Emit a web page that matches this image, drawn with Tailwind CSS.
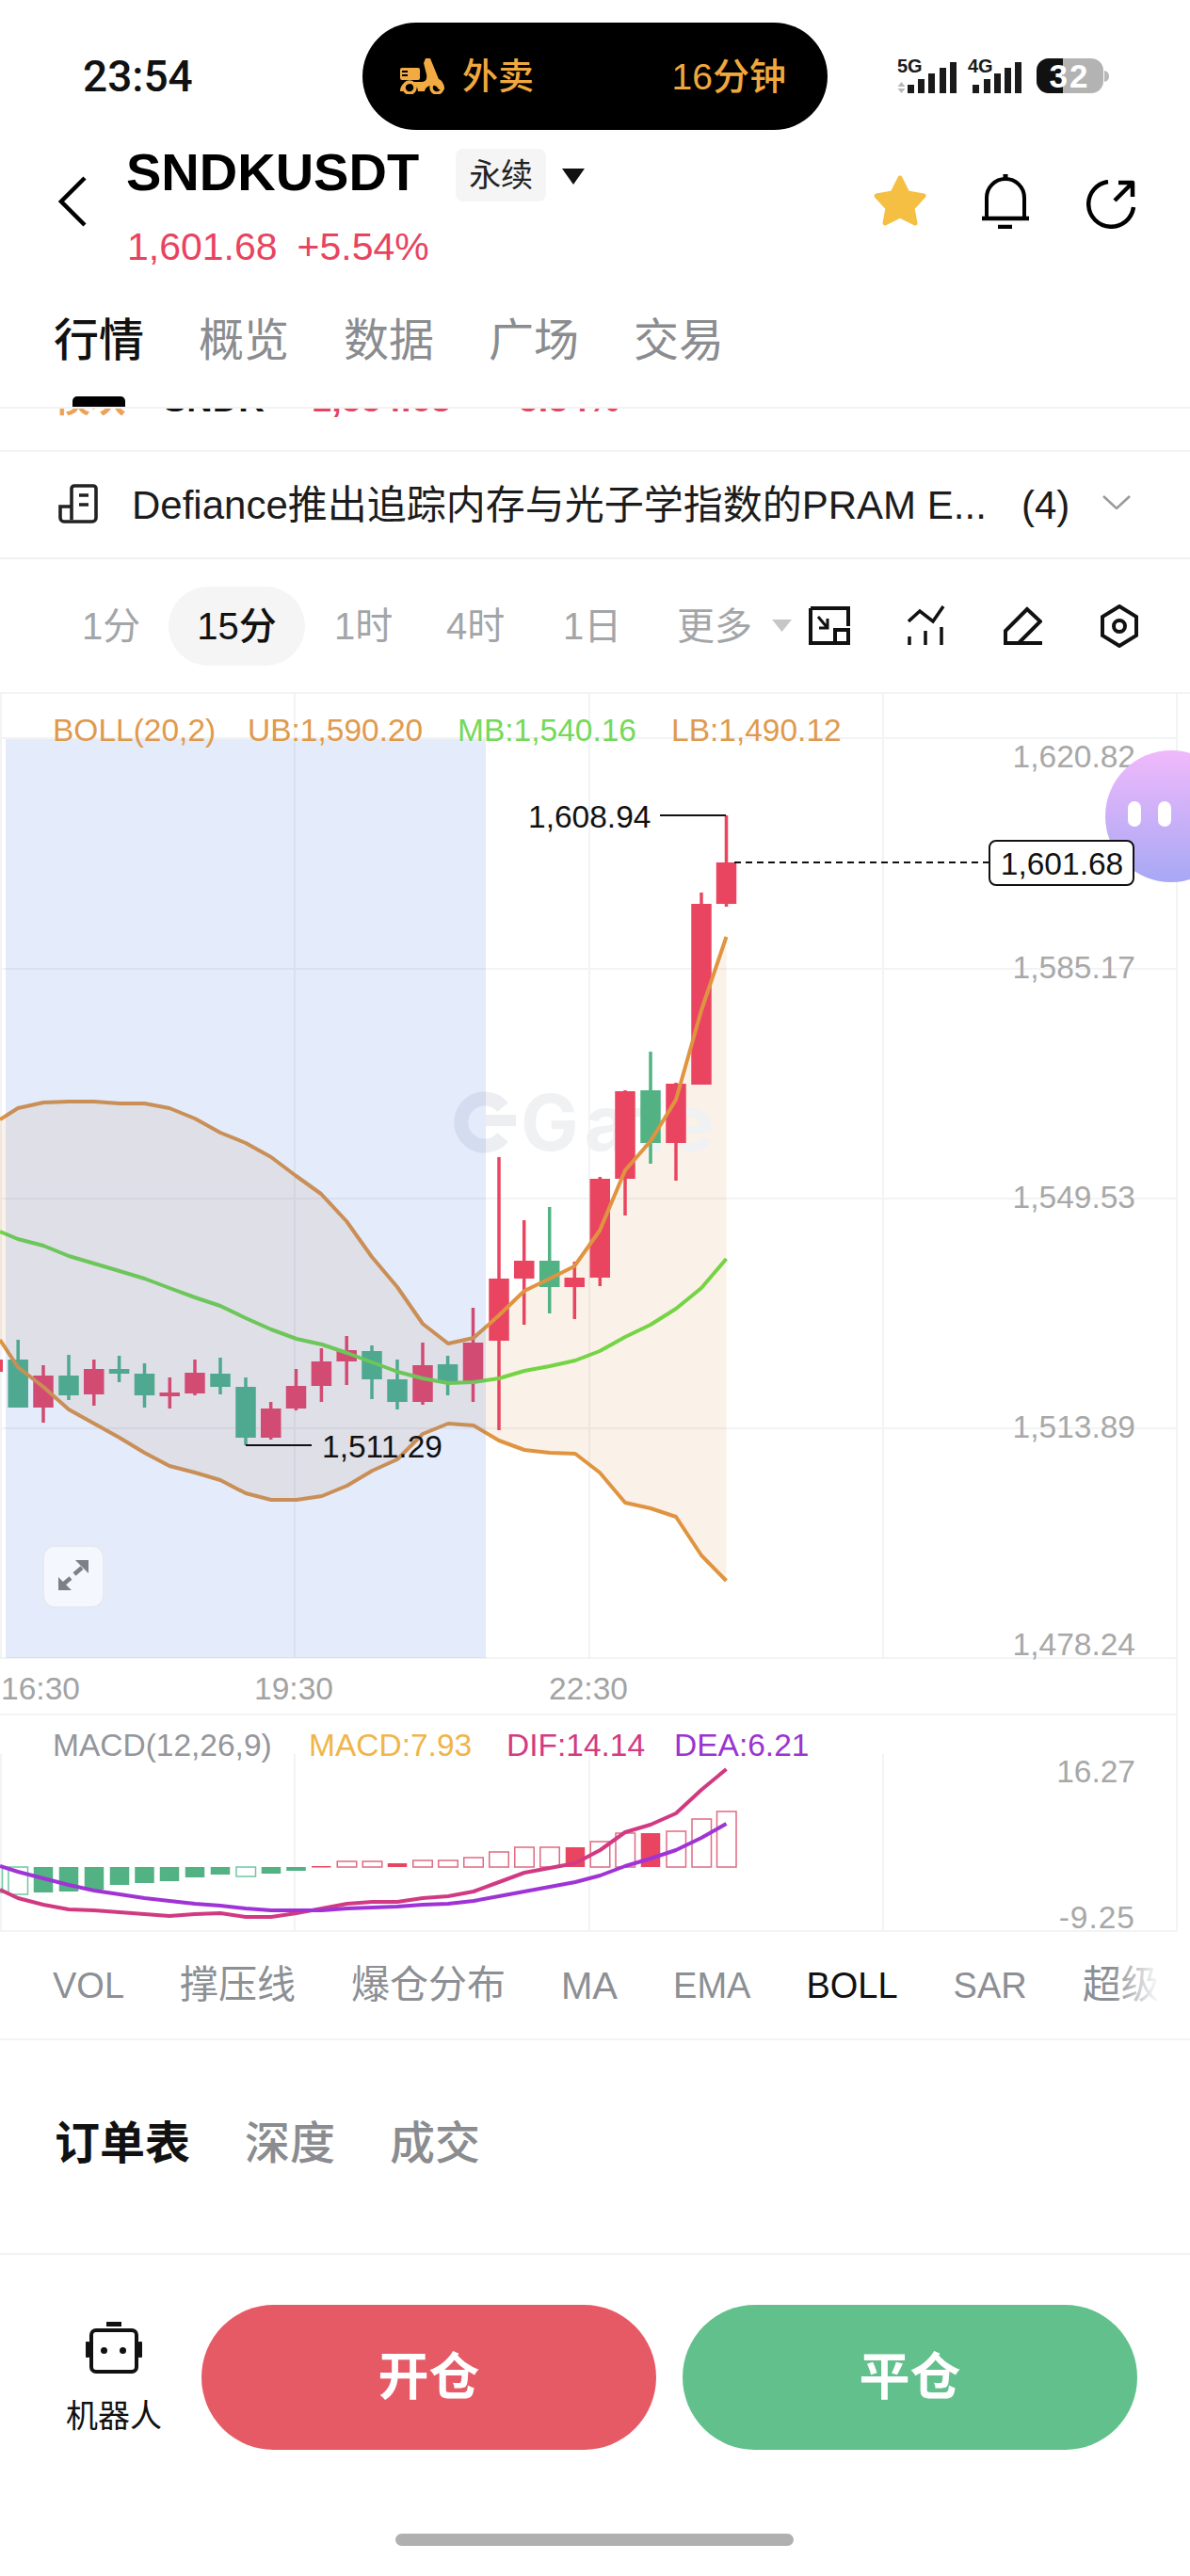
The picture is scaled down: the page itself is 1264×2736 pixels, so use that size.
<!DOCTYPE html>
<html lang="zh">
<head>
<meta charset="utf-8">
<script src="https://cdn.jsdelivr.net/npm/@tailwindcss/browser@4"></script>
</head>
<body class="bg-white">
<div class="w-[1264px] h-[2736px] overflow-hidden bg-white text-black [font-family:'Liberation_Sans','Noto_Sans_CJK_SC',sans-serif]">

  <!-- status bar -->
  <div class="flex items-start h-[150px] pt-[24px]">
    <div class="w-[385px] h-[114px] pl-[88px] flex items-center text-[46px] font-medium [font-family:Roboto,sans-serif] text-[#111]">23:54</div>
    <div class="w-[494px] h-[114px] bg-black rounded-full flex items-center pl-[40px] pr-[44px] text-[#f0a83e]">
      <svg width="47" height="38" viewBox="0 0 47 38" fill="#f1ab42"><rect x="0" y="10" width="21" height="13" rx="2"/><rect x="2" y="13" width="6" height="2" fill="#000"/><rect x="2" y="17" width="6" height="2" fill="#000"/><path d="M27 0h5l9 22c3 1 6 5 6 11h-6a8 8 0 0 0-15 2H19a8 8 0 0 0-16 0H0c0-6 4-10 9-10h14c4 0 6-3 5-8l-3-12z"/><circle cx="10" cy="31" r="6" fill="none" stroke="#f1ab42" stroke-width="3.5"/><circle cx="39" cy="31" r="6" fill="none" stroke="#f1ab42" stroke-width="3.5"/></svg>
      <span class="ml-[19px] text-[38px] leading-none font-medium">外卖</span>
      <span class="ml-auto text-[39px] leading-none font-medium">16分钟</span>
    </div>
    <svg class="ml-[74px] mt-[28px]" width="226" height="48" viewBox="953 52 226 48">
      <g fill="#1a1a1a">
        <text x="953" y="77" font-size="20" font-weight="700">5G</text>
        <text x="1028" y="77" font-size="20" font-weight="700">4G</text>
        <path d="M964 90h7v9h-7zM975 84h7v15h-7zM986 78h7v21h-7zM998 72h7v27h-7zM1009 66h7v33h-7zM1033 90h7v9h-7zM1045 84h7v15h-7zM1056 78h7v21h-7zM1067 72h7v27h-7zM1078 66h7v33h-7z"/>
      </g>
      <path d="M957.5 87l4 5h-8zM957.5 99l4-5h-8z" fill="#b8b8b8"/>
      <rect x="1101" y="62" width="71" height="37" rx="13" fill="#b3b3b3"/>
      <path d="M1129 62h-15a13 13 0 0 0-13 13v11a13 13 0 0 0 13 13h15z" fill="#111"/>
      <path d="M1173 75a6 6 0 0 1 5 6a6 6 0 0 1-5 6z" fill="#b8b8b8"/>
      <text x="1136" y="93" text-anchor="middle" font-size="35" font-weight="700" letter-spacing="2" fill="#fff">32</text>
    </svg>
  </div>

  <!-- title -->
  <div class="flex h-[150px]">
    <div class="w-[134px] pl-[62px] pt-[37px]">
      <svg width="30" height="54" viewBox="0 0 30 54" fill="none" stroke="#000" stroke-width="4.5"><path d="M28 2L3 27l25 25"/></svg>
    </div>
    <div>
      <div class="flex items-center h-[72px]">
        <span class="text-[56px] leading-none font-bold -mt-[6px]">SNDKUSDT</span>
        <span class="ml-[39px] w-[96px] h-[56px] bg-[#f5f5f5] rounded-[8px] flex items-center justify-center text-[34px] leading-none text-[#222]">永续</span>
        <svg class="ml-[17px] mt-[2px]" width="24" height="17" viewBox="0 0 24 17"><path d="M0 0h24L12 17z" fill="#111"/></svg>
      </div>
      <div class="flex items-center h-[57px] mt-[12px] pl-[1px] text-[41px] leading-none text-[#e8445f]">
        <span>1,601.68</span><span class="ml-[21px]">+5.54%</span>
      </div>
    </div>
    <div class="ml-auto mr-[58px] pt-[35px] flex items-start">
      <svg width="58" height="56" viewBox="0 0 58 56"><path d="M29 4l8 16 17 3-12 13 3 16-16-8-16 8 3-16L4 23l17-3z" fill="#f4bf42" stroke="#f4bf42" stroke-width="5" stroke-linejoin="round"/></svg>
      <svg class="ml-[58px]" width="50" height="58" viewBox="0 0 50 58" fill="none" stroke="#000" stroke-width="4"><path d="M5 46V25a20 20 0 0 1 40 0v21"/><path d="M0 47h50" stroke-width="4.5"/><path d="M17 56h15" stroke-width="4.5"/><path d="M25 0v6" stroke-width="5"/></svg>
      <svg class="ml-[61px] mt-[6px]" width="52" height="52" viewBox="0 0 52 52" fill="none" stroke="#000" stroke-width="4.5"><path d="M23 2A24 24 0 1 0 50 29"/><path d="M30 22L49 3M34 3h15v15" stroke-linejoin="round"/></svg>
    </div>
  </div>

  <!-- tabs -->
  <div class="flex gap-[58px] pl-[57px] pt-[38px] h-[134px] border-b-2 border-[#f3f3f3] text-[48px] leading-[48px] text-[#8a8c8f]">
    <div class="flex flex-col items-center text-[#111] font-medium"><span>行情</span><span class="mt-[35px] w-[56px] h-[11px] bg-black rounded-t-[5px]"></span></div>
    <span>概览</span><span>数据</span><span>广场</span><span>交易</span>
  </div>

  <!-- clipped scrolled row -->
  <div class="h-[44px] overflow-hidden border-b-2 border-[#f3f3f3] box-content">
    <div class="flex items-center -mt-[30px] h-[40px] pl-[58px] text-[38px] leading-[40px] font-bold">
      <span class="w-[115px] text-[#eda25a]">模块</span><span class="w-[158px] text-[#111]">SNDK</span><span class="w-[207px] text-[#e8445f]">1,554.68</span><span class="text-[#e8445f]">-5.34%</span>
    </div>
  </div>

  <!-- news row -->
  <div class="h-[112px] flex items-center border-b-2 border-[#f0f0f0] box-content">
    <svg class="ml-[62px] -mt-[2px]" width="42" height="42" viewBox="0 0 42 42" fill="none" stroke="#222" stroke-width="3.6"><path d="M14 38V5a3 3 0 0 1 3-3h20a3 3 0 0 1 3 3v31a4 4 0 0 1-4 4H6a4 4 0 0 1-4-4V24h12"/><path d="M22 12h10M22 22h10"/></svg>
    <span class="ml-[36px] mt-[2px] text-[42px] leading-none text-[#1c1c1c] whitespace-nowrap w-[904px]">Defiance推出追踪内存与光子学指数的PRAM E...</span>
    <span class="ml-[41px] mt-[2px] text-[42px] leading-none text-[#1c1c1c]">(4)</span>
    <svg class="ml-[35px] -mt-[6px]" width="30" height="15" viewBox="0 0 30 15" fill="none" stroke="#9a9a9a" stroke-width="2.5"><path d="M1 1l14 13L29 1"/></svg>
  </div>

  <!-- toolbar -->
  <div class="h-[141px] flex items-center text-[40px] leading-none text-[#a3a5a8]">
    <span class="ml-[87px] w-[62px] whitespace-nowrap">1分</span>
    <span class="ml-[30px] w-[145px] h-[84px] rounded-full bg-[#f5f5f5] flex items-center justify-center text-[#111] font-medium">15分</span>
    <span class="ml-[31px] w-[61px] whitespace-nowrap">1时</span>
    <span class="ml-[58px] w-[64px] whitespace-nowrap">4时</span>
    <span class="ml-[60px] w-[56px] whitespace-nowrap">1日</span>
    <span class="ml-[65px] w-[82px] whitespace-nowrap">更多</span>
    <svg class="ml-[19px]" width="21" height="13" viewBox="0 0 21 13"><path d="M0 0h21L10.500 13z" fill="#c4c6c9"/></svg>
    <svg class="ml-[18px]" width="44" height="41" viewBox="0 0 44 41" fill="none" stroke="#111" stroke-width="4"><path d="M2 2h40v19M2 2v37h40"/><path d="M28 25h14v14H28z"/><path d="M10 11l10 12M20 13v10H11" stroke-width="3"/></svg>
    <svg class="ml-[61px]" width="40" height="44" viewBox="0 0 40 44" fill="none" stroke="#111" stroke-width="3.5"><path d="M1 17L13 6l14 11L38 1"/><path d="M2 33v9M19 27v15M36 23v19"/></svg>
    <svg class="ml-[61px]" width="42" height="42" viewBox="0 0 42 42" fill="none" stroke="#111" stroke-width="4"><path d="M26 3L3 26v13h14l23-23z"/><path d="M17 39h25"/></svg>
    <svg class="ml-[62px]" width="40" height="46" viewBox="0 0 40 46" fill="none" stroke="#111" stroke-width="4"><path d="M20 2l18 11v20L20 44 2 33V13z"/><circle cx="20" cy="23" r="6"/></svg>
  </div>

  <!-- chart -->
  <svg class="block" width="1264" height="1317" viewBox="0 735 1264 1317">
    <!-- grid -->
    <path d="M0 736H1264M0 784H1250M0 1029H1250M0 1273H1250M0 1517H1250M0 1761H1250M0 1821H1250M0 2051H1250M1 735V1761M313 735V1761M626 735V1761M938 735V1761M1250 735V2051M1 1863V2051M313 1863V2051M626 1863V2051M938 1863V2051" stroke="#f2f3f5" stroke-width="2" fill="none"/>
    <!-- band -->
    <path d="M0 1189L19 1177 46 1171 73 1170 100 1170 127 1172 153.500 1172 180 1177 207 1188 234 1203 261 1214 288 1229 314.500 1249 341 1268 368 1297 395 1335 422 1367 449 1406 476 1427 503 1421 530 1397 557 1371 584 1358 610 1345 637 1307 664 1243 691 1212 718 1168 745 1073 771.500 995V1679L745 1652 718 1611 691 1602 664 1596 637 1564 611 1544 584 1543 557 1540 530 1530 503 1514 476 1512 449 1523 422 1550 395.500 1562 368.600 1578 342 1589 315 1593 288 1593 261 1586 234 1572 207 1564 180 1557 153.500 1543 127 1527 100 1512 73 1497 46 1473 19 1452 0 1423Z" fill="#cd7319" fill-opacity=".1"/>
    <!-- watermark -->
    <path d="M534 1176A25 25 0 1 0 534 1208" fill="none" stroke="#edeef1" stroke-width="15"/>
    <path d="M516 1190h32" stroke="#edeef1" stroke-width="12"/>
    <text x="553" y="1222" font-size="82" font-weight="700" letter-spacing="6" fill="#f0f1f3" font-family="Inter, sans-serif">Gate</text>
    <!-- candles -->
    <g stroke="#52b283" stroke-width="3.500" fill="none">
      <path d="M19.200 1423V1495M73 1439V1487M126.600 1440V1468M153.500 1448V1495M234 1442V1481M261 1463V1535M395 1429V1486M422 1444V1497M475.600 1440V1482M583.700 1282V1395M691 1117V1236"/>
    </g>
    <path fill="#52b283" d="M8.450 1444h21.500v51H8.450zM62.250 1461h21.500v21H62.250zM115.850 1454h21.500v5H115.850zM142.750 1459h21.500v23H142.750zM223.250 1459h21.500v14H223.250zM250.250 1473h21.500v54H250.250zM384.250 1435h21.500v30H384.250zM411.250 1465h21.500v24H411.250zM464.850 1449h21.500v18H464.850zM572.950 1339h21.500v28H572.950zM680.250 1158h21.500v56H680.250z"/>
    <g stroke="#ea4560" stroke-width="3.500" fill="none">
      <path d="M46 1450V1511M99.800 1444V1493M180.300 1463V1496M207 1444V1482M287.700 1489V1529M314.500 1454V1498M341.400 1432V1489M368.200 1419V1471M449 1426V1492M502.500 1389V1489M530 1229V1519M556.700 1296V1407M610.300 1340V1401M637.300 1250V1366M664 1158V1291M718 1150V1254M745 948V1152M771.500 866V963"/>
    </g>
    <path fill="#ea4560" d="M-8 1444h11v13H-8zM35.250 1461h21.500v34H35.250zM89 1454h21.500v27H89zM169.500 1479h21.500v4H169.500zM196.250 1458h21.500v22H196.250zM277 1496h21.500v31H277zM303.750 1472h21.500v24H303.750zM330.650 1446h21.500v26H330.650zM357.450 1434h21.500v12H357.450zM438.250 1450h21.500v39H438.250zM491.750 1426h21.500v41H491.750zM519.250 1358h21.500v66H519.250zM546 1339h21.500v19H546zM599.500 1357h21.500v10H599.500zM626.500 1252h21.500v105H626.500zM653.250 1159h21.500v93H653.250zM707.250 1151h21.500v63H707.250zM734.250 960h21.500v192H734.250zM760.750 916h21.500v44H760.750z"/>
    <!-- bollinger lines -->
    <g fill="none" stroke-width="4" stroke-linejoin="round">
      <path stroke="#e09440" d="M0 1189L19 1177 46 1171 73 1170 100 1170 127 1172 153.500 1172 180 1177 207 1188 234 1203 261 1214 288 1229 314.500 1249 341 1268 368 1297 395 1335 422 1367 449 1406 476 1427 503 1421 530 1397 557 1371 584 1358 610 1345 637 1307 664 1243 691 1212 718 1168 745 1073 771.500 995"/>
      <path stroke="#e09440" d="M0 1423L19 1452 46 1473 73 1497 100 1512 127 1527 153.500 1543 180 1557 207 1564 234 1572 261 1586 288 1593 315 1593 342 1589 368.600 1578 395.500 1562 422 1550 449 1523 476 1512 503 1514 530 1530 557 1540 584 1543 611 1544 637 1564 664 1596 691 1602 718 1611 745 1652 771.500 1679"/>
      <path stroke="#74d444" d="M0 1308L19 1316 46 1323 73 1334 100 1342 127 1350 153.500 1358 180 1368 207 1378 234 1387 261 1400 288 1412 315 1422 342 1428 368.600 1437 395.500 1447 422.400 1457 449 1464 476 1469 503 1468 530 1464 557 1456 584 1451 611 1445 637 1435 664 1420 691 1407 718 1390 745 1368 771.500 1337"/>
    </g>
    <!-- selection overlay -->
    <rect x="6" y="785" width="510" height="976" fill="#3e70e2" fill-opacity=".14"/>
    <!-- floating bubble -->
    <defs><linearGradient id="bub" x1="0" y1="0" x2="0" y2="1"><stop offset="0" stop-color="#f0b9fb"/><stop offset="1" stop-color="#a7a8f5"/></linearGradient></defs>
    <!-- labels -->
    <text x="1206" y="815" font-size="33.500" fill="#a8a8a8" text-anchor="end">1,620.82</text>
    <circle cx="1244" cy="867" r="70" fill="url(#bub)"/>
    <rect x="1198" y="851" width="14" height="27" rx="7" fill="#fff"/>
    <rect x="1230" y="851" width="14" height="27" rx="7" fill="#fff"/>
    <g font-size="33.500" fill="#a8a8a8" text-anchor="end">
      <text x="1206" y="1039">1,585.17</text>
      <text x="1206" y="1283">1,549.53</text>
      <text x="1206" y="1527">1,513.89</text>
      <text x="1206" y="1758">1,478.24</text>
      <text x="1206" y="1893">16.27</text>
      <text x="1206" y="2048" letter-spacing="1">-9.25</text>
    </g>
    <g font-size="33.500" fill="#a3a3a3" text-anchor="middle">
      <text x="43" y="1805">16:30</text>
      <text x="312" y="1805">19:30</text>
      <text x="625" y="1805">22:30</text>
    </g>
    <g font-size="33.500">
      <text x="56" y="787" fill="#e09a4c">BOLL(20,2)</text>
      <text x="263" y="787" fill="#e09a4c">UB:1,590.20</text>
      <text x="486" y="787" fill="#74d958">MB:1,540.16</text>
      <text x="713" y="787" fill="#e09a4c">LB:1,490.12</text>
      <text x="56" y="1865" fill="#93969c">MACD(12,26,9)</text>
      <text x="328" y="1865" fill="#f0b548">MACD:7.93</text>
      <text x="538" y="1865" fill="#d33a82">DIF:14.14</text>
      <text x="716" y="1865" fill="#9a34d1">DEA:6.21</text>
      <text x="561" y="879" fill="#111">1,608.94</text>
      <text x="342" y="1548" fill="#111">1,511.29</text>
    </g>
    <path d="M701 866H771M261 1535H331" stroke="#111" stroke-width="2" fill="none"/>
    <path d="M780 916H1051" stroke="#111" stroke-width="2" stroke-dasharray="7 5" fill="none"/>
    <rect x="1051" y="893" width="153" height="47" rx="7" fill="#fff" stroke="#111" stroke-width="2"/>
    <text x="1128" y="929" font-size="33.500" text-anchor="middle" fill="#111">1,601.68</text>
    <!-- expand button -->
    <rect x="46" y="1642" width="64" height="65" rx="12" fill="#f4f7fe" stroke="#e6e9ee" stroke-width="2"/>
    <path d="M80 1657h14v14zM62 1675v14h14z" fill="#7d8085"/>
    <path d="M87 1665l-8 7M75 1676l-7 6" stroke="#7d8085" stroke-width="4.500" fill="none"/>
    <!-- MACD histogram -->
    <path fill="#52b283" d="M35.750 1983h20.500v27H35.750zM62.750 1983h20.500v26H62.750zM89.750 1983h20.500v24H89.750zM116.750 1983h20.500v19H116.750zM143.250 1983h20.500v17H143.250zM169.750 1983h20.500v15H169.750zM196.750 1983h20.500v11H196.750zM223.750 1983h20.500v8H223.750zM277.750 1983h20.500v7H277.750zM304.250 1983h20.500v4H304.250z"/>
    <path fill="none" stroke="#6fc7a2" stroke-width="1.500" d="M9 1983h20.500v29H9zM-18 1983h20.500v27H-18zM251 1983h20.500v10H251z"/>
    <path fill="#ea4560" d="M331 1982h20.500v1.500H331zM411.750 1979h20.500v4H411.750zM600.750 1962h20.500v21H600.750zM680.750 1947h20.500v36H680.750z"/>
    <path fill="none" stroke="#df6b82" stroke-width="1.500" d="M358.250 1977h20.500v6H358.250zM385.250 1977h20.500v6H385.250zM438.750 1976h20.500v7H438.750zM465.750 1976h20.500v7H465.750zM492.750 1973h20.500v10H492.750zM519.750 1967h20.500v16H519.750zM546.750 1962h20.500v21H546.750zM573.750 1962h20.500v21H573.750zM627.250 1956h20.500v27H627.250zM654 1947h20.500v36H654zM708 1945h20.500v38H708zM735 1932h20.500v51H735zM761.500 1924h20.500v59H761.500z"/>
    <g fill="none" stroke-width="4" stroke-linejoin="round">
      <path stroke="#d13a82" d="M0 2007L19 2016 46 2023 73 2028 100 2029 127 2031 153.500 2033 180 2035 207 2033 234 2032 261 2036 288 2036 315 2032 342 2027 368.600 2022 395.500 2020 422 2020 449 2016 476 2014 503 2009 530 1999 557 1989 584 1984 611 1979 637.500 1965 664 1946 691 1938 718 1926 745 1901 771.500 1879"/>
      <path stroke="#a033d6" d="M0 1982L19 1988 46 1995 73 2002 100 2008 127 2012 153.500 2016 180 2019 207 2022 234 2024 261 2027 288 2029 315 2029 342 2029 368.600 2027 395.500 2026 422 2025 449 2023 476 2022 503 2019 530 2014 557 2009 584 2004 611 1999 637.500 1992 664 1982 691 1974 718 1965 745 1952 771.500 1937"/>
    </g>
  </svg>

  <!-- indicator row -->
  <div class="relative h-[115px] flex items-center gap-[59px] pl-[56px] border-b-2 border-[#f3f3f3] overflow-hidden text-[38px] leading-none text-[#8c8f94] whitespace-nowrap">
    <span>VOL</span>
    <span class="text-[41px]">撑压线</span>
    <span class="text-[41px]">爆仓分布</span>
    <span class="text-[40px]">MA</span>
    <span>EMA</span>
    <span class="text-[#111]">BOLL</span>
    <span>SAR</span>
    <span class="text-[41px]">超级</span>
    <div class="absolute right-[32px] top-0 bottom-[2px] w-[50px] bg-gradient-to-r from-white/0 to-white"></div>
    <div class="absolute right-0 top-0 bottom-[2px] w-[32px] bg-white"></div>
  </div>

  <!-- order tabs -->
  <div class="h-[228px] flex items-center gap-[58px] pl-[58px] pb-[6px] border-b-2 border-[#f3f3f3] text-[48px] leading-none text-[#8a8c8f]">
    <span class="text-[#111] font-bold">订单表</span><span class="font-medium">深度</span><span class="font-medium">成交</span>
  </div>

  <!-- footer -->
  <div class="pt-[53px]">
    <div class="flex">
      <div class="w-[214px] flex flex-col items-center pl-[28px] pt-[18px]">
        <svg width="60" height="55" viewBox="0 0 60 55"><rect x="22" y="0" width="16" height="5" fill="#111"/><rect x="6" y="9" width="48" height="44" rx="5" fill="none" stroke="#111" stroke-width="4"/><rect x="0" y="21" width="4" height="17" rx="1" fill="#111"/><rect x="56" y="21" width="4" height="17" rx="1" fill="#111"/><circle cx="19.500" cy="30.500" r="3.500" fill="#111"/><circle cx="39.500" cy="30.500" r="3.500" fill="#111"/></svg>
        <span class="mt-[28px] text-[34px] leading-none text-[#111] whitespace-nowrap">机器人</span>
      </div>
      <div class="w-[483px] h-[154px] rounded-full bg-[#e65a66] flex items-center justify-center text-[54px] leading-none font-bold text-white">开仓</div>
      <div class="ml-[28px] w-[483px] h-[154px] rounded-full bg-[#62c08c] flex items-center justify-center text-[54px] leading-none font-bold text-white">平仓</div>
    </div>
    <div class="mt-[89px] ml-[420px] w-[423px] h-[13px] rounded-full bg-[#b0b0b0]"></div>
  </div>
</div>
</body>
</html>
